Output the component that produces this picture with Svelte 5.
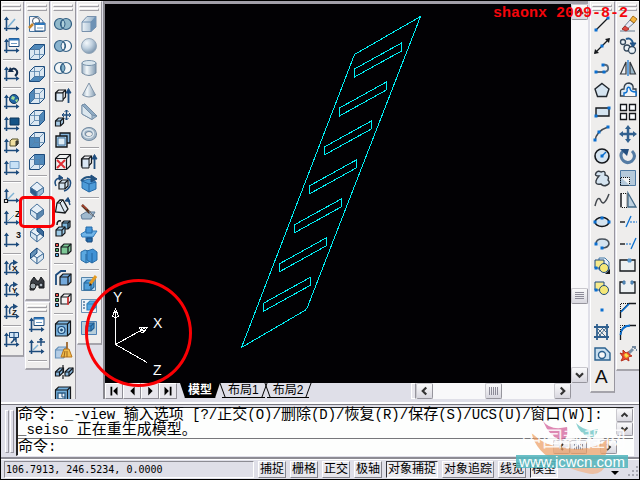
<script lang="ts">
  // ── Icon helpers (22 × 22 grid) ─────────────────────────────────────────────

  const NAVY = '#1d4b7c';
  const BLUE = '#0a6fd0';
  const PALE = '#d5e4f0';
  const INK = '#15181c';

  const p = (d: string, fill = 'none', stroke = NAVY, w = 1) =>
    `<path d="${d}" fill="${fill}" stroke="${stroke}" stroke-width="${w}"/>`;
  const c = (x: number, y: number, r: number, fill = 'none', stroke = NAVY, w = 1) =>
    `<circle cx="${x}" cy="${y}" r="${r}" fill="${fill}" stroke="${stroke}" stroke-width="${w}"/>`;
  const dots = (...pts: number[][]) =>
    pts.map(([x, y]) => `<rect x="${x - 1.5}" y="${y - 1.5}" width="3" height="3" fill="${BLUE}"/>`).join('');
  const letter = (x: number, y: number, s: string, size = 9) =>
    `<text x="${x}" y="${y}" font-family="Liberation Sans, sans-serif" font-weight="bold" font-size="${size}" fill="#111">${s}</text>`;

  const axes =
    p('M5.5 18V5M3 15.5H17', 'none', NAVY, 1.6) +
    p('M3 7L5.5 3.5L8 7zM15 13L18.5 15.5L15 18z', NAVY, 'none');
  const win = (x: number, y: number) =>
    p(`M${x} ${y}h10v8h-10z`, '#fff', NAVY) + p(`M${x} ${y + 1}h10`, 'none', '#2d77bd', 2) + p(`M${x + 2} ${y + 5}h6`, 'none', '#6f9cc4', 1);

  const faces: Record<string, string> = {
    top: 'M3.5 8.5L8.5 3.5H18.5L13.5 8.5z',
    bottom: 'M3.5 18.5L8.5 13.5H18.5L13.5 18.5z',
    left: 'M3.5 8.5L8.5 3.5V13.5L3.5 18.5z',
    right: 'M13.5 8.5L18.5 3.5V13.5L13.5 18.5z',
    front: 'M3.5 8.5H13.5V18.5H3.5z',
    back: 'M8.5 3.5H18.5V13.5H8.5z',
  };
  const cube = (face: string) =>
    p('M3.5 8.5L8.5 3.5H18.5V13.5L13.5 18.5H3.5z', '#dce8f2', NAVY) +
    p(faces[face], '#4f89bb', NAVY) +
    p('M3.5 8.5H13.5V18.5M13.5 8.5L18.5 3.5M8.5 3.5V13.5H18.5M8.5 13.5L3.5 18.5', 'none', '#5580a8', 0.8);
  const iso = (l: string, r: string, t = '#e6eff7') =>
    p('M11 3L17.5 8.5L11 13L4.5 8.5z', t, '#49739c') +
    p('M4.5 8.5V13.5L11 19V13z', l, '#49739c') +
    p('M17.5 8.5V13.5L11 19V13z', r, '#49739c');
  const box = (x: number, y: number, s: number, d: number, fill = '#a8cbe6', ink = INK, w = 1.2) =>
    p(`M${x} ${y + d}L${x + d} ${y}H${x + s + d}V${y + s}L${x + s} ${y + s + d}H${x}z`, fill, ink, w) +
    p(`M${x} ${y + d}H${x + s}V${y + s + d}M${x + s} ${y + d}L${x + d + s} ${y}`, 'none', ink, w);
  const bullets =
    p('M3.5 4.5h3v3h-3z', '#eb4a43', INK) + p('M3.5 9.5h3v3h-3z', '#4fae63', INK) + p('M3.5 14.5h3v3h-3z', '#55a6dd', INK);
  const turn = p('M9 13Q7 6 13 5.5', 'none', NAVY, 1.4) + p('M12 2.5L17 5.5L12 8.5z', NAVY, 'none');
  const shapes =
    p('M4 5h9v8h-9z', '#f7eb8b', NAVY) + c(13, 13, 4.5, '#f5e878', NAVY) + dots([5, 13]);

  const icons: Record<string, string> = {
    UCS: axes + p('M7 14L14 6', 'none', '#7eb2d4', 1.6),
    'Named UCS': axes + win(8, 3.5),
    'UCS Previous': axes + p('M9 8Q13 3 16 8Q17 11 14 13', 'none', '#142d4c', 2) + p('M7 9L9 4L13 9z', '#142d4c', 'none'),
    'World UCS': axes + c(13, 8, 4.5, '#2166a5', '#12365f') + p('M11 5l3 1-1 3-3-1zM14 9l3-1-1 4z', '#a6dd91', 'none'),
    'Object UCS': axes + p('M9 5h9v7H9z', '#155386', '#0c365d'),
    'Face UCS': axes + p('M9 6l2-2h6v5l-2 2H9z', '#f0dfa0', '#55502a') + p('M15 6h2v3l-2 2z', '#4b4728', '#333'),
    'View UCS': axes + p('M9 4.5h9v7H9z', '#c8e1f6', '#719bc4'),
    'Origin UCS': axes + p('M7 14L13 8', 'none', '#7eb2d4', 1.4) + p('M3.5 14.5h3v3h-3z', '#fff', INK, 1.2),
    'Z Axis Vector UCS': axes + p('M7 14L13 8', 'none', '#7eb2d4') + letter(14, 10, 'Z', 9),
    '3 Point UCS': axes + letter(15, 9, '3', 9),
    'Rotate X': axes + turn + letter(11, 14, 'X', 8),
    'Rotate Y': axes + turn + letter(11, 14, 'Y', 8),
    'Rotate Z': axes + turn + letter(11, 14, 'Z', 8),
    'Apply UCS': axes + p('M8.5 3.5h9v5h-9zM13 3.5v5', '#cfe3f5', NAVY) + p('M10 14L15 9M15 9v4M12 10h3', 'none', NAVY, 1.5),
    'Move UCS': axes + p('M7 14L12 9', 'none', '#7eb2d4', 1.5) + p('M15 2v8M11 6h8', 'none', NAVY, 1.4) + p('M13.5 4L15 2L16.5 4z', NAVY),

    'Named Views':
      p('M3.5 3.500H12L17 8V18.500H3.500z', '#f6f6fc', '#46749e') + c(10, 8, 3.5, '#fff', '#435267') +
      p('M7 11L3 15', 'none', '#c58327', 2.5) + win(9, 10),
    'Top View': cube('top'),
    'Bottom View': cube('bottom'),
    'Left View': cube('left'),
    'Right View': cube('right'),
    'Front View': cube('front'),
    'Back View': cube('back'),
    'SW Isometric': iso('#2e5d8d', '#9abbd7'),
    'SE Isometric': iso('#d8e6f1', '#5b88b0'),
    'NE Isometric': iso('#d8e6f1', '#edf3f7') + p('M11 8V3L17.500 8.500V13.500z', '#3c6c9b', NAVY),
    'NW Isometric': iso('#edf3f7', '#d8e6f1') + p('M11 8V3L4.500 8.500V13.500z', '#6592b9', NAVY),
    Camera:
      p('M5 8L8 4L11 8H13L15 4L18 8V15H13V12H10L8 17H4z', '#393d43', '#17191c') + c(7, 13, 3, '#9fa8ae', '#1f2123') +
      c(15, 12, 2, '#aeb8c2', '#17191c'),

    Union: c(8, 11, 5.5, '#91b9cb', '#315e83', 1.2) + c(14, 11, 5.5, '#91b9cb', '#315e83', 1.2) + p('M11 6.500Q7 11 11 15.500Q15 11 11 6.500', '#b1d2dc', '#315e83'),
    Subtract: c(14, 11, 5.5, '#f4f6f9', '#315e83', 1.2) + c(8, 11, 5.5, '#8ab4cf', '#315e83', 1.2) + p('M11 6.500Q7 11 11 15.500Q15 11 11 6.500', '#f4f6f9', '#315e83'),
    Intersect: c(8, 11, 5.5, '#f3f6f7', '#315e83', 1.2) + c(14, 11, 5.5, '#f3f6f7', '#315e83', 1.2) + p('M11 6.500Q7 11 11 15.500Q15 11 11 6.500', '#82b2ca', '#315e83'),
    'Extrude Faces': box(3.5, 5, 7, 3, '#ececef') + p('M4 8h7v8H4z', '#dceaf7', INK) + p('M16.500 18V7', 'none', NAVY, 1.8) + p('M14 8L16.500 3.500L19 8z', NAVY),
    'Move Faces': box(3.5, 11, 5, 3) + p('M14.500 3v10M10 8h9', 'none', NAVY, 1.4) + p('M12.500 5l2-2 2 2M12.500 11l2 2 2-2M12 6l-2 2 2 2M17 6l2 2-2 2', 'none', NAVY),
    'Offset Faces': p('M8 4h10v10H8z', '#86b6dc', INK, 1.3) + p('M4 7h11v11H4z', '#a7cce6', INK, 1.4) + p('M6 9h7v7H6z', '#deedf6', '#4d7ba4'),
    'Delete Faces': box(3.5, 3.5, 11, 4, '#eff1f1') + p('M5 9l8 8M13 9l-8 8', 'none', '#e02f34', 2),
    'Rotate Faces': box(7, 7, 6, 3, '#d6e5f1') + p('M4 13Q1 7 7 5M15 5Q20 7 18 13Q16 17 12 18', 'none', NAVY, 1.6) + p('M7 2l4 3-4 2z', NAVY),
    'Taper Faces': p('M3.500 17L5 8L8 5H11L16 14L13 18z', '#dfeaf3', INK, 1.3) + p('M5 8H8L13 18M8 8L11 5', 'none', INK) + p('M18 10L16 4', 'none', NAVY, 1.5) + p('M13 6l3-3.500 2 4z', NAVY),
    'Copy Faces': box(10, 4, 6, 2, '#7ab5dc') + box(4, 10, 6, 3, '#9dcbe8') + p('M5 8Q5 3 9 4', 'none', INK, 1.5),
    'Color Faces': bullets + box(9, 5, 7, 3, '#7dc896'),
    'Copy Edges': box(8, 7, 8, 3, '#74aadd') + p('M4 18V8L9 4h5', 'none', NAVY, 1.8),
    'Color Edges': bullets + box(9, 5, 7, 3, '#f2f2f2') + p('M16 8v8', 'none', '#ee3938', 1.5),
    Imprint: box(3.5, 4, 12, 3, '#7cb5e0') + c(9.5, 13, 3.5, '#b9dcf0', NAVY, 1.2) + c(9.5, 13, 1, NAVY),
    Clean: box(3.5, 8, 8, 3, '#b4cde5', '#6892b9') + p('M15 3v8', 'none', '#9d652b', 1.8) + p('M12 10h5l3 8h-11z', '#f2bc4a', '#b9751d') + p('M13 12l-1 6M15 12v6', 'none', '#9c6518'),
    Separate: box(3.5, 7, 4, 4, '#8abae0') + box(13, 7, 4, 4, '#8abae0') + p('M11 4v3M11 9v3M11 14v4', 'none', INK, 1.2),
    Shell: box(3.5, 4, 12, 3, '#74b0dd') + p('M6 10h7v6H6z', '#eaf3f9', '#2e5d84', 1.3) + p('M10 10v4h3'),

    Box: p('M4 9L9 3.500H18V14L13 18.500H4z', 'url(#steel)', '#7891ac') + p('M4 9H13V18.500M13 9L18 3.500', 'none', '#6f8eaf') + p('M13 9L18 3.500V14L13 18.500z', '#6e92b5', 'none'),
    Sphere: c(11, 11, 7.5, 'url(#ball)', '#93a6b8'),
    Cylinder: p('M4 6V16Q11 21 18 16V6z', 'url(#tube)', '#748aa0') + '<ellipse cx="11" cy="6" rx="7" ry="2.500" fill="#dae6ee" stroke="#7993ab"/>',
    Cone: p('M11 4L17.500 16Q11 20 4.500 16z', 'url(#tube)', '#8194a8'),
    Wedge: p('M4 4V13L14 18.500L19 15L7 3z', 'url(#steel)', '#7890a8') + p('M4 4L14 14V18.500L4 13z', '#dbe6ee', '#7890a8') + p('M4 4L7 3L19 15L14 14z', '#8fabc4', '#7890a8'),
    Torus: '<ellipse cx="11" cy="11" rx="5.500" ry="4.500" fill="none" stroke="#657f98" stroke-width="5"/><ellipse cx="11" cy="11" rx="5.500" ry="4.500" fill="none" stroke="#a2b5c6" stroke-width="3.500"/><ellipse cx="10.500" cy="10.500" rx="5" ry="4" fill="none" stroke="#dce6ed" stroke-width="1.500"/>',
    Extrude: box(3.5, 5, 7, 3, '#ececef') + p('M4 8h7v9H4z', '#dae7f4', INK) + p('M16.500 18V6', 'none', NAVY, 1.8) + p('M14 8L16.500 3.500L19 8z', NAVY),
    Revolve: p('M4 8L11 6L18 9V16L11 19L4 15z', '#4d9bd8', '#276aa7') + p('M4 8L11 11L18 9M11 11v8', 'none', '#2465a2') + p('M3 8Q8 2 15 5', 'none', '#24547f', 2) + p('M13 2l6 4-6 3z', '#24547f'),
    Slice: p('M3 14L8 11H17L13 18H4z', '#9fb9ce', '#607d99') + p('M4 4L12 12', 'none', '#53321f', 2.5) + p('M11 10l6 6-5-3z', '#eef0f2', '#6a7582') + p('M4 4l5 4', 'none', '#b04430', 1.5),
    Section: p('M8 6h6v12H8z', '#2a83cc', '#1d5c96') + p('M3 11L8 8H19L15 14H4z', '#6fb4e8', '#2f79b8') + p('M8 4h6v6H8z', '#4697d9', '#256ba9') + p('M9 15h5v4H9z', '#246eae'),
    Interfere: p('M3 7L7 5L13 7V16L8 18L3 15z', '#5ba8e0', '#296da6') + p('M9 6L15 4L19 7V15L14 18L9 15z', '#3f91d5', '#296da6') + p('M8 9v9M14 8v10', 'none', '#20639d'),
    'Setup Drawing': p('M3.500 4.500h14v13h-14z', '#c3dff4', '#5584aa') + box(6, 7, 7, 3, '#51a0db', '#28689c') + p('M12 11L18 3', 'none', '#e49b23', 3) + p('M11 13l1-3 2 2z', '#222', 'none'),
    'Setup View': p('M3.500 4.500h15v13h-15z', '#eef4f8', '#6b93b5') + p('M5 7h2M5 10h2M5 13h2', 'none', '#557a9c', 1.500) + box(9, 6, 6, 3, '#55a9e3', '#3584bb'),
    'Setup Profile': p('M3.500 4.500h15v13h-15z', '#b7ceda', '#4f81b4') + box(8, 6, 5, 3, '#3e8dcb', '#235d90'),

    Line: p('M5 17L17 5', 'none', INK, 1.3) + dots([5, 17], [17, 5]),
    'Construction Line': p('M4 18L18 4', 'none', INK, 1.3) + p('M3 19l1-5 4 4zM19 3l-5 1 4 4z', INK, 'none') + dots([11, 11]),
    Polyline: p('M5 15H14Q18 14 17 10Q16 7 12 8', 'none', '#55697d', 1.8) + dots([5, 15], [13, 15], [12, 8]),
    Polygon: p('M11 4.500L18 10L15.500 17.500H6.500L4 10z', PALE, '#20262c', 1.4),
    Rectangle: p('M5 7h13v8H5z', PALE, INK, 1.4) + dots([5, 15], [18, 7]),
    Arc: p('M4 18Q5 8 17 4', 'none', '#414850', 1.5) + dots([4, 17], [8, 9], [17, 4]),
    Circle: c(11, 11, 7, PALE, INK, 1.6) + p('M11 11l4-4', 'none', BLUE, 1.5) + dots([11, 11]),
    'Revision Cloud': p('M8 9Q3 9 5 6Q7 3 10 5Q15 3 14 8Q19 9 17 13Q20 16 16 18Q12 20 10 17Q4 18 5 14Q6 11 8 9z', PALE, '#343b42', 1.4),
    Spline: p('M4 17Q7 5 10 12Q13 18 18 5', 'none', '#43484e', 1.5),
    Ellipse: '<ellipse cx="11" cy="11" rx="7" ry="4.500" fill="#d5e4f0" stroke="#15181c" stroke-width="1.600"/>' + dots([4, 11], [11, 7], [18, 11]),
    'Ellipse Arc': p('M5 11Q5 6 11 6Q18 6 18 11Q17 15 11 15', PALE, '#47515b', 1.6) + dots([5, 11], [11, 15]),
    'Insert Block': p('M8 3h6l4 4v8H8z', '#e8eff7', '#457ba8') + shapes + p('M19 14v5h-5z', INK, 'none'),
    'Make Block': shapes,
    Point: dots([11, 11]),
    Hatch: p('M3 6H18M3 16H18M6 3V19M16 3V19', 'none', '#2f5f8e', 1.8) + p('M7 8l7 7M7 12l3 3M11 7l4 4M8 15l7-8M7 12l5-5', 'none', '#496e8e'),
    Region: p('M4 5H14L19 10V17H4z', '#c9dfef', '#2b618f', 1.4) + c(11, 12, 3.500, '#f7f7f7', '#2b618f', 1.4),
    'Multiline Text': '<text x="4" y="18" font-family="Liberation Sans, sans-serif" font-size="19" fill="#111">A</text>',

    Erase: p('M3 18H18', 'none', '#637890') + p('M5 16L13 7L17 10L9 17z', '#e8e9f5', '#6c8192') + p('M13 7l3-4 4 3-3 4z', '#f6b53e', '#a36d19') + p('M5 16l3-3 4 3-3 2z', '#df4a43', '#a7342e'),
    'Copy Object': c(6, 7, 2.500, '#e9f0f5', '#33475b', 1.3) + c(10, 13, 3, '#e9f0f5', '#33475b', 1.3) + c(15, 15, 3.500, '#e9f0f5', '#33475b', 1.3) + p('M9 4Q14 2 16 8', 'none', '#205a91', 2) + p('M13 8h6l-3 4z', '#205a91'),
    Mirror: p('M3.500 17L9 5V17z', '#eef0f3', '#30363d', 1.2) + p('M18.500 17L13 5V17z', '#9bb7c9', '#30363d', 1.2) + p('M11 3V19', 'none', BLUE, 1.2),
    Offset: p('M3.500 17V13Q3 10 7 10Q7 4 12 4Q17 5 16 10H19V17z', '#dfe9f1', '#333e49', 1.3) + p('M7 17V14Q11 14 10 10Q11 7 13 9Q13 13 19 13V17', '#f4f5f6', BLUE, 1.4),
    Array: p('M3.500 3.500h6v6h-6zM12.500 3.500h6v6h-6zM3.500 12.500h6v6h-6zM12.500 12.500h6v6h-6z', '#fbfdff', INK, 1.3),
    Move: p('M11 5v12M5 11h12', 'none', '#31608e', 2.500) + p('M8 6l3-4 3 4zM8 16l3 4 3-4zM6 8l-4 3 4 3zM16 8l4 3-4 3z', '#31608e', 'none'),
    Rotate: p('M8 5Q2 8 5 14Q9 20 15 16Q20 11 15 6', 'none', '#557ca4', 3) + p('M3 4h9l-2 7z', '#254f7e', 'none'),
    Scale: p('M3.500 3.500H18.500V18.500H3.500z', '#b5cadb', '#4f7ba4') + '<path d="M4 10.500H12.500V18M3.500 18.500H12M3.500 11V18" fill="#f3f5f5" stroke="#111" stroke-dasharray="1 1"/>',
    Stretch: p('M11 4L19 18H11z', '#bed1df', '#426987', 1.3) + '<path d="M4 4.500h6v14H4z" fill="#f7f7f7" stroke="#111" stroke-dasharray="1 1"/>' + p('M4 4V18', 'none', INK, 1.3),
    Trim: p('M3 11h5', 'none', INK, 1.4) + p('M9 16L14 5', 'none', BLUE, 1.300) + '<path d="M13 11h7" stroke="#0a6fd0" stroke-dasharray="2 1"/>',
    Extend: p('M3 11h5', 'none', INK, 1.4) + '<path d="M9 11h5" stroke="#0a6fd0" stroke-dasharray="2 1"/>' + p('M14 16L19 5', 'none', BLUE, 1.300),
    'Break at Point': p('M12 5H18V16H3V5H12', '#ecf0f2', INK, 1.3) + p('M11 4h3v3h-3z', '#5595cc', '#5595cc'),
    Break: p('M7 5H3V16H18V5H15', '#ecf0f2', INK, 1.3) + p('M6 4h2v3H6zM14 4h2v3h-2z', '#5595cc', '#4779a6'),
    Chamfer: p('M3.500 19V13L12 4.500H19', 'none', INK, 1.3) + p('M4 13L12 5', 'none', BLUE, 1.6) + '<path d="M3.500 12V4.500H11" fill="none" stroke="#111" stroke-dasharray="1 1"/>',
    Fillet: p('M3.500 19V14Q4 5 13 4.500H19', 'none', INK, 1.3) + p('M3.500 14Q4 5 13 4.500', 'none', BLUE, 1.800) + '<path d="M3.500 11V4.500H9" fill="none" stroke="#111" stroke-dasharray="1 1"/>',
    Explode:
      p('M3 10l3 1 0-4 3 3 4-2-1 3 3 2-4 1 1 4-3-2-5 2 2-4z', '#ef4b2c', '#b5301d') + p('M7 12l2-2 3 3-3 2z', '#f9df4e', '#f0a030') +
      p('M12 10L16 6', 'none', '#7992a8', 3) + p('M15 4h2M18 3v3M19 7h1', 'none', '#4e6a86', 1.500),
  };

  // ── Toolbars: each one a list of groups ─────────────────────────────────────

  const leftDocks = [
    [[
      ['UCS', 'Named UCS'], ['UCS Previous'], ['World UCS', 'Object UCS', 'Face UCS', 'View UCS'],
      ['Origin UCS', 'Z Axis Vector UCS', '3 Point UCS'], ['Rotate X', 'Rotate Y', 'Rotate Z'], ['Apply UCS'],
    ]],
    [
      [
        ['Named Views'], ['Top View', 'Bottom View', 'Left View', 'Right View', 'Front View', 'Back View'],
        ['SW Isometric', 'SE Isometric', 'NE Isometric', 'NW Isometric'], ['Camera'],
      ],
      [['Named UCS', 'Move UCS'], []],
    ],
    [[
      ['Union', 'Subtract', 'Intersect'],
      ['Extrude Faces', 'Move Faces', 'Offset Faces', 'Delete Faces', 'Rotate Faces', 'Taper Faces', 'Copy Faces', 'Color Faces'],
      ['Copy Edges', 'Color Edges'], ['Imprint', 'Clean', 'Separate', 'Shell'],
    ]],
    [[
      ['Box', 'Sphere', 'Cylinder', 'Cone', 'Wedge', 'Torus'], ['Extrude', 'Revolve'],
      ['Slice', 'Section', 'Interfere'], ['Setup Drawing', 'Setup View', 'Setup Profile'],
    ]],
  ];
  const rightDocks = [
    [[[
      'Line', 'Construction Line', 'Polyline', 'Polygon', 'Rectangle', 'Arc', 'Circle', 'Revision Cloud', 'Spline',
      'Ellipse', 'Ellipse Arc', 'Insert Block', 'Make Block', 'Point', 'Hatch', 'Region', 'Multiline Text',
    ]]],
    [[[
      'Erase', 'Copy Object', 'Mirror', 'Offset', 'Array', 'Move', 'Rotate', 'Scale', 'Stretch', 'Trim', 'Extend',
      'Break at Point', 'Break', 'Chamfer', 'Fillet', 'Explode',
    ]]],
  ];

  // ── Drawing ──────────────────────────────────────────────────────────────────

  const slots = Array.from({ length: 7 }, (_, i) => {
    const x = 354.5 - i * 15.1;
    const y = 69 + i * 39;
    return `${x},${y} ${x + 47},${y - 26} ${x + 47},${y - 18} ${x},${y + 8}`;
  });

  // ── Command line and status bar ──────────────────────────────────────────────

  const history = ['命令: _-view 输入选项 [?/正交(O)/删除(D)/恢复(R)/保存(S)/UCS(U)/窗口(W)]:', '_seiso 正在重生成模型。'];
  let command = $state('');

  const sheets = ['模型', '布局1', '布局2'];
  let sheet = $state('模型');

  let modes = $state([
    { name: '捕捉', on: false },
    { name: '栅格', on: false },
    { name: '正交', on: false },
    { name: '极轴', on: false },
    { name: '对象捕捉', on: true },
    { name: '对象追踪', on: false },
    { name: '线宽', on: false },
    { name: '模型', on: true },
  ]);

  const arrows: Record<string, string> = {
    up: 'M4 10L8 6L12 10',
    down: 'M4 6L8 10L12 6',
    left: 'M10 4L6 8L10 12',
    right: 'M6 4L10 8L6 12',
  };
  const steps = [
    ['First sheet', 'M4 3h2v10H4zM12 3v10L7 8z'],
    ['Previous sheet', 'M11 3v10L6 8z'],
    ['Next sheet', 'M6 3v10l5-5z'],
    ['Last sheet', 'M10 3h2v10h-2zM4 3v10l5-5z'],
  ];
</script>

{#snippet toolbar(groups: string[][])}
  <div class="toolbar" role="toolbar">
    <div class="grip"><i></i><i></i></div>
    {#each groups as group, i}
      {#if i > 0}<hr />{/if}
      {#each group as name}
        <button class="tool" aria-label={name} title={name}>
          <svg viewBox="0 0 22 22">{@html icons[name]}</svg>
        </button>
      {/each}
    {/each}
  </div>
{/snippet}

{#snippet arrow(dir: string)}
  <button class="arrow" aria-label="Scroll {dir}">
    <svg viewBox="0 0 16 16"><path d={arrows[dir]} fill="none" stroke="#333" stroke-width="2.5" /></svg>
  </button>
{/snippet}

{#snippet mixed(text: string)}
  {#each text.split(/([\u3000-\u9fff]+)/) as part, i}{#if i % 2}<span class="han">{part}</span>{:else}{part}{/if}{/each}
{/snippet}

<svg class="defs" aria-hidden="true">
  <defs>
    <linearGradient id="steel"><stop offset="0" stop-color="#edf3f7" /><stop offset="1" stop-color="#8ba9c4" /></linearGradient>
    <linearGradient id="tube">
      <stop offset="0" stop-color="#9bb1c5" /><stop offset="0.35" stop-color="#f4f8fa" /><stop offset="1" stop-color="#7f99b1" />
    </linearGradient>
    <radialGradient id="ball" cx="0.35" cy="0.3" r="0.7">
      <stop offset="0" stop-color="#f4f8fb" /><stop offset="0.5" stop-color="#c3d3e1" /><stop offset="1" stop-color="#8099b1" />
    </radialGradient>
  </defs>
</svg>

<main>
  <div class="workspace">
    <div class="docks">
      {#each leftDocks as dock}
        <div class="dock">{#each dock as groups}{@render toolbar(groups)}{/each}</div>
      {/each}
    </div>

    <section class="view">
      <div class="model">
        <svg class="drawing" viewBox="105 4 466 379" preserveAspectRatio="xMinYMin meet">
          <g fill="none" stroke="#00f0f5" shape-rendering="crispEdges">
            <polygon points="420.5,16.5 354.5,54.5 241.5,347.5 306.5,309.5" />
            {#each slots as points}<polygon {points} />{/each}
          </g>
          <g fill="none" stroke="#fff" shape-rendering="crispEdges">
            <path d="M115.500 311V344.500L147 327M115.500 344.500L147 362.500" />
            <path d="M115.500 309L112.500 316L115.500 318L118.500 316zM147.500 327L139.500 327L141 332L144 332zM141 328l3 4" />
          </g>
          <g class="axis-names">
            <text x="113" y="302">Y</text>
            <text x="153" y="328">X</text>
            <text x="153" y="375">Z</text>
          </g>
        </svg>
      </div>
      <div class="scroll vertical">
        {@render arrow('up')}
        <div class="before"></div>
        <div class="thumb"></div>
        <div class="after"></div>
        {@render arrow('down')}
      </div>
      <div class="sheets">
        {#each steps as [name, d]}
          <button class="step" aria-label={name}><svg viewBox="0 0 16 16"><path {d} /></svg></button>
        {/each}
        <div class="tabs" role="tablist">
          {#each sheets as name}
            <button class="tab" class:active={sheet === name} role="tab" aria-selected={sheet === name} onclick={() => (sheet = name)}>
              {name}
            </button>
          {/each}
        </div>
        <div class="splitter"></div>
        <div class="scroll">
          {@render arrow('left')}
          <div class="half"></div>
          <div class="thumb"></div>
          <div class="half"></div>
          {@render arrow('right')}
        </div>
      </div>
    </section>

    <div class="docks">
      {#each rightDocks as dock}
        <div class="dock">{#each dock as groups}{@render toolbar(groups)}{/each}</div>
      {/each}
    </div>
  </div>

  <section class="command">
    <div class="command-grip"><i></i><i></i></div>
    <div class="console">
      <div class="history">
        <div class="lines">
          {#each history as line}<div class="line">{@render mixed(line)}</div>{/each}
        </div>
        <div class="spin">{@render arrow('up')}{@render arrow('down')}</div>
      </div>
      <div class="prompt">
        <label class="line" for="command">{@render mixed('命令:')}</label>
        <input id="command" bind:value={command} autocomplete="off" />
        <div class="scroll">
          {@render arrow('left')}
          <div class="thumb"></div>
          <div class="half"></div>
          {@render arrow('right')}
        </div>
      </div>
    </div>
  </section>

  <footer>
    <output>106.7913, 246.5234, 0.0000</output>
    {#each modes as mode}
      <button class="mode" class:on={mode.on} aria-pressed={mode.on} onclick={() => (mode.on = !mode.on)}>{mode.name}</button>
    {/each}
    <div class="tray">
      <button class="tray-menu" aria-label="Status bar menu"><svg viewBox="0 0 8 5"><path d="M0 0h8L4 4z" /></svg></button>
      <svg class="sizer" viewBox="0 0 12 12">
        <path d="M9 0h2v2H9zM5 4h2v2H5zM9 4h2v2H9zM1 8h2v2H1zM5 8h2v2H5zM9 8h2v2H9z" fill="#a8a8b2" />
      </svg>
    </div>
  </footer>

  <div class="stamp">shaonx 2009-8-2</div>
  <div class="mark ring"></div>
  <div class="mark frame"></div>

  <div class="watermark">
    <svg viewBox="0 0 116 62">
      <path d="M28 4Q35 14 52 10Q55 22 45 23Q34 19 28 4z" fill="#d46aa0" opacity="0.8" />
      <path d="M61 6Q71 16 83 12Q81 22 74 20Q64 16 61 6z" fill="#70c5c5" opacity="0.8" />
      <path d="M16 15Q28 29 51 31Q79 35 94 21Q94 32 88 44H42Q22 37 16 15z" fill="#ec9c61" opacity="0.7" />
      <path d="M49 47H91Q87 60 71 56Q56 53 49 47z" fill="#efb691" opacity="0.8" />
    </svg>
    <div class="site-name">中国教程网</div>
    <div class="site">www.jcwcn.com</div>
  </div>
</main>

<style>
  :global(body) {
    margin: 0;
    background: #000;
  }

  main {
    position: relative;
    box-sizing: border-box;
    display: grid;
    grid-template-rows: minmax(0, 1fr) auto auto;
    height: 100vh;
    border: 1px solid #000;
    overflow: hidden;
    background: #dfdfe8;
    color: #000;
    font: 12px 'Liberation Sans', 'Noto Sans CJK SC', sans-serif;
  }

  button {
    box-sizing: border-box;
    padding: 0;
    border: 0;
    background: none;
    color: inherit;
    font: inherit;
  }

  svg {
    display: block;
  }

  .defs {
    position: absolute;
    width: 0;
    height: 0;
  }

  /* Toolbars */

  .workspace {
    display: flex;
    min-height: 0;
    padding-bottom: 3px;
    overflow: hidden;
  }

  .docks {
    display: flex;
    gap: 1px;
    overflow: hidden;
  }

  .dock {
    display: flex;
    flex-direction: column;
    gap: 1px;
  }

  .toolbar {
    box-sizing: border-box;
    display: flex;
    flex-direction: column;
    align-items: flex-start;
    flex: none;
    width: 25px;
    padding-bottom: 4px;
    border: 1px solid #fff;
    border-right-color: #98969f;
    border-bottom: 2px solid #a5a4ab;
    background: #eeedec;
  }

  .docks:first-child .dock:first-child .toolbar {
    width: 23px;
    border-left: 0;
  }

  .docks:last-child .dock:last-child .toolbar {
    width: 23px;
    border-right: 0;
  }

  .grip {
    display: flex;
    flex-direction: column;
    gap: 1px;
    align-self: stretch;
    padding: 2px 2px 2px 1px;
  }

  .grip i {
    height: 1px;
    border: 1px solid #fff;
    border-right-color: #aaa9ae;
    border-bottom-color: #a09fa5;
  }

  hr {
    align-self: stretch;
    height: 1px;
    margin: 2px 2px;
    border: 0;
    border-top: 1px solid #a3a2a6;
    background: #fff;
  }

  .tool {
    flex: none;
    width: 22px;
    height: 22px;
  }

  .tool svg {
    width: 22px;
    height: 22px;
  }

  /* Model view */

  .view {
    display: grid;
    flex: 1;
    grid-template-columns: minmax(0, 1fr) 17px;
    grid-template-rows: minmax(0, 1fr) 16px;
    min-width: 0;
    margin: 0 2px 0 1px;
    border-top: 3px solid #a29fa9;
    border-left: 2px solid #8a8990;
  }

  .model {
    overflow: hidden;
    background: #020104;
  }

  .drawing {
    width: 100%;
    height: 100%;
  }

  .axis-names {
    fill: #fff;
    font: 14px 'Liberation Sans', sans-serif;
  }

  .scroll {
    display: flex;
    background: #f8f8fa;
  }

  .vertical {
    flex-direction: column;
  }

  .vertical .before {
    flex: 81;
  }

  .vertical .after {
    flex: 19;
  }

  .half {
    flex: 1;
  }

  .arrow,
  .thumb {
    box-sizing: border-box;
    flex: none;
    width: 17px;
    height: 16px;
    border: 1px solid #96959d;
    border-top-color: #c9c8ce;
    border-left-color: #c9c8ce;
    border-radius: 2px;
    background: linear-gradient(#fafafb, #d8d7df);
  }

  .arrow svg {
    width: 100%;
    height: 100%;
  }

  .thumb {
    padding: 3px;
  }

  .thumb::before {
    display: block;
    height: 100%;
    background: repeating-linear-gradient(90deg, #8c8b98 0 1px, transparent 1px 2px);
    content: '';
  }

  .vertical .thumb::before {
    background: repeating-linear-gradient(#8c8b98 0 1px, transparent 1px 2px);
  }

  .sheets {
    display: flex;
    grid-column: 1;
  }

  .step {
    width: 18px;
    border: 1px solid #fff;
    border-right-color: #8e8d95;
    border-bottom-color: #8e8d95;
    background: #e7e6ec;
  }

  .step svg {
    width: 16px;
    height: 14px;
  }

  .tabs {
    display: flex;
    flex: 1;
    gap: 2px;
    min-width: 0;
    padding-left: 3px;
  }

  .tab {
    position: relative;
    height: 15px;
    padding: 0 6px;
    border-bottom: 1px solid #000;
    line-height: 14px;
    white-space: nowrap;
  }

  .tab::before,
  .tab::after {
    position: absolute;
    top: 0;
    bottom: 0;
    width: 1px;
    background: #000;
    content: '';
  }

  .tab::before {
    left: 0;
    transform: skewX(20deg);
  }

  .tab::after {
    right: 0;
    transform: skewX(-20deg);
  }

  .tab.active {
    padding: 0 8px;
    background: #000;
    clip-path: polygon(0 0, 100% 0, calc(100% - 5px) 100%, 5px 100%);
    color: #fff;
    font-weight: bold;
  }

  .splitter {
    width: 3px;
    border: 1px solid #fff;
    border-right-color: #96959d;
    background: #e7e6ec;
  }

  .sheets .scroll {
    width: 155px;
  }

  /* Command line */

  .command {
    display: flex;
    gap: 2px;
    padding: 3px 5px 1px 4px;
    border-top: 2px solid #fff;
    box-shadow: inset 0 1px #77767e;
  }

  .command-grip {
    display: flex;
    gap: 1px;
    padding: 3px 0;
  }

  .command-grip i {
    width: 2px;
    border: 1px solid #fff;
    border-right-color: #98979f;
    border-bottom-color: #98979f;
  }

  .console {
    flex: 1;
    min-width: 0;
    border: 1px solid #fff;
    border-top: 1px solid #222;
    border-left: 2px solid #222;
    background: #fdfefd;
    font: 14px 'Liberation Mono', 'Noto Sans CJK SC', monospace;
  }

  .history {
    display: flex;
    height: 30px;
    border-bottom: 1px solid #77777b;
  }

  .lines {
    flex: 1;
    min-width: 0;
  }

  .line {
    height: 15px;
    line-height: 15px;
    white-space: nowrap;
  }

  .han {
    font-size: 15px;
    line-height: 15px;
  }

  .spin {
    display: flex;
    flex-direction: column;
    width: 17px;
  }

  .spin .arrow {
    height: 14px;
  }

  .prompt {
    display: flex;
    align-items: center;
    height: 16px;
    padding-right: 16px;
  }

  .prompt input {
    flex: 1;
    min-width: 0;
    height: 15px;
    padding: 0 4px;
    border: 0;
    outline: 0;
    background: none;
    font: inherit;
  }

  .prompt .scroll {
    width: 64px;
  }

  .prompt .arrow,
  .prompt .thumb {
    height: 14px;
  }

  /* Status bar */

  footer {
    display: flex;
    gap: 4px;
    padding: 2px 0 1px 3px;
    border-top: 2px solid #8d8c94;
    box-shadow: inset 0 1px #fff;
    line-height: 15px;
  }

  output {
    flex: 1;
    min-width: 0;
    padding-left: 1px;
    border: 1px solid #8d8c94;
    border-right-color: #fff;
    border-bottom-color: #fff;
    font: 10px/15px 'DejaVu Sans Mono', monospace;
    white-space: nowrap;
  }

  .mode {
    height: 17px;
    padding: 0 1px;
    border: 1px solid #fff;
    border-right-color: #85848c;
    border-bottom-color: #85848c;
    background: #e7e6ec;
    line-height: 15px;
    white-space: nowrap;
  }

  .mode.on {
    border-color: #33333a #fff #fff #33333a;
    background: #ededf2;
  }

  .tray {
    display: flex;
    align-items: flex-end;
    justify-content: flex-end;
    gap: 8px;
    width: 77px;
  }

  .tray-menu {
    padding-bottom: 2px;
  }

  .tray-menu svg {
    width: 8px;
    height: 5px;
  }

  .sizer {
    width: 12px;
    height: 12px;
  }

  /* Annotations */

  .stamp {
    position: absolute;
    top: 4px;
    right: 11px;
    color: #f4050b;
    font: bold 15px/17px 'Liberation Mono', monospace;
    pointer-events: none;
  }

  .mark {
    position: absolute;
    box-sizing: border-box;
    border: 3px solid #fa0004;
    pointer-events: none;
  }

  .ring {
    top: 278px;
    left: 84px;
    width: 107px;
    height: 108px;
    border-radius: 50%;
  }

  .frame {
    top: 195px;
    left: 18px;
    width: 36px;
    height: 32px;
    border-radius: 5px;
  }

  .watermark {
    position: absolute;
    right: 8px;
    bottom: 0;
    width: 116px;
    height: 62px;
    pointer-events: none;
  }

  .watermark svg {
    position: absolute;
    inset: 0;
  }

  .site-name {
    position: absolute;
    top: 10px;
    right: 5px;
    color: rgba(255, 255, 255, 0.85);
    font-size: 21px;
    line-height: 24px;
  }

  .site {
    position: absolute;
    right: 3px;
    bottom: 11px;
    width: 112px;
    background: rgba(85, 183, 190, 0.88);
    color: #fff;
    font-size: 15px;
    line-height: 13px;
    text-align: center;
  }
</style>
